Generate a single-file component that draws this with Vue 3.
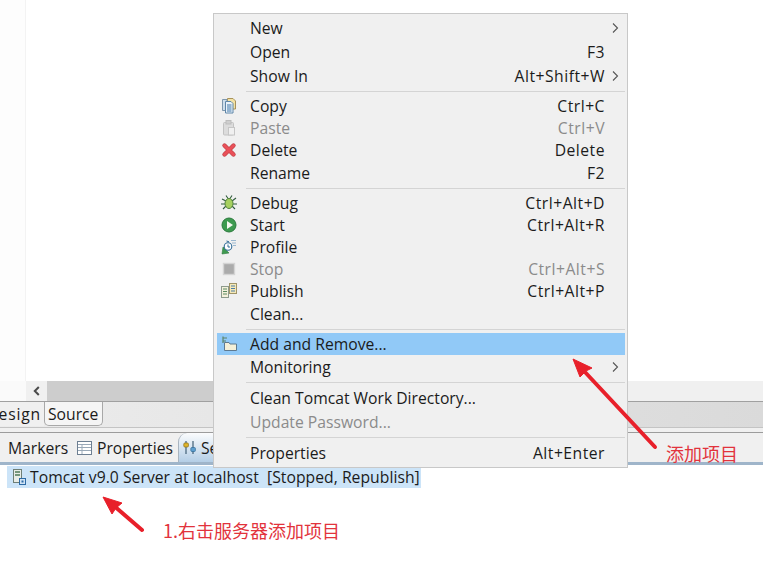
<script setup>
// menu rows, grouped; separators are drawn between the groups
const groups = [
  [
    { label: 'New', arrow: true },
    { label: 'Open', key: 'F3' },
    { label: 'Show In', key: 'Alt+Shift+W', arrow: true },
  ],
  [
    { label: 'Copy', key: 'Ctrl+C', icon: 'copy' },
    { label: 'Paste', key: 'Ctrl+V', icon: 'paste', off: true },
    { label: 'Delete', key: 'Delete', icon: 'delete' },
    { label: 'Rename', key: 'F2' },
  ],
  [
    { label: 'Debug', key: 'Ctrl+Alt+D', icon: 'debug' },
    { label: 'Start', key: 'Ctrl+Alt+R', icon: 'start' },
    { label: 'Profile', icon: 'profile' },
    { label: 'Stop', key: 'Ctrl+Alt+S', icon: 'stop', off: true },
    { label: 'Publish', key: 'Ctrl+Alt+P', icon: 'publish' },
    { label: 'Clean...' },
  ],
  [
    { label: 'Add and Remove...', icon: 'add', active: true },
    { label: 'Monitoring', arrow: true },
  ],
  [
    { label: 'Clean Tomcat Work Directory...' },
    { label: 'Update Password...', off: true },
  ],
  [{ label: 'Properties', key: 'Alt+Enter' }],
]

const serverLabel = 'Tomcat v9.0 Server at localhost  [Stopped, Republish]'
</script>

<template>
  <div class="page">
    <div class="editor"><div class="gutter"></div></div>

    <div class="hscroll">
      <div class="scroll-left"></div>
      <div class="scroll-btn">
        <svg width="10" height="10" viewBox="0 0 10 10"><path d="M6.8 1 L2.8 5 L6.8 9" fill="none" stroke="#4a4a4a" stroke-width="2" /></svg>
      </div>
      <div class="scroll-thumb"></div>
    </div>

    <div class="editor-tabs">
      <div class="etab design"><span>Design</span></div>
      <div class="etab source">Source</div>
    </div>
    <div class="tab-gap"></div>

    <div class="view-tabs">
      <div class="vtab markers">
        <svg class="marker-icon" width="16" height="16" viewBox="0 0 16 16"><circle cx="-2" cy="7" r="6" fill="#dfe6ee" stroke="#8aa0b4" /><path d="M3 11 L6 15" stroke="#8aa0b4" stroke-width="1.5" /></svg>
        <span>Markers</span>
      </div>
      <div class="vtab props">
        <svg width="15" height="14" viewBox="0 0 15 14"><rect x="0.5" y="0.5" width="14" height="13" fill="#fff" stroke="#6d7f92" /><path d="M1 3.5 H14 M1 6.5 H14 M1 9.5 H14 M5 3.5 V13" stroke="#9aa9b8" /></svg>
        <span>Properties</span>
      </div>
      <div class="vtab servers">
        <svg width="14" height="15" viewBox="0 0 14 15">
          <path d="M3 1 V14 M10 1 V14" stroke="#4d6a80" stroke-width="1.3" />
          <rect x="0.8" y="3" width="4.6" height="4" rx="1" fill="#e0b52c" stroke="#8a6d12" stroke-width=".7" />
          <rect x="7.8" y="7.5" width="4.6" height="4" rx="1" fill="#5e9fd0" stroke="#2f6a96" stroke-width=".7" />
        </svg>
        <span>Servers</span>
      </div>
    </div>
    <div class="view-edge"></div>

    <div class="tree">
      <div class="tree-row">
        <svg width="13" height="16" viewBox="0 0 13 16">
          <rect x="0.5" y="0.5" width="8" height="13" fill="#e8ece6" stroke="#6f7f76" />
          <path d="M2 3 H7 M2 6 H7" stroke="#4f7a58" stroke-width="1.4" />
          <rect x="6.5" y="9.5" width="6" height="6" fill="#cfe3f5" stroke="#2c6aa5" />
          <rect x="8.5" y="11.5" width="2" height="2" fill="#2c6aa5" />
        </svg>
        <span class="server-label">{{ serverLabel }}</span>
      </div>
    </div>

    <!-- context menu lies over the views -->
    <div class="menu">
      <template v-for="(group, g) in groups" :key="g">
        <div v-if="g > 0" class="sep"></div>
        <div
          v-for="item in group"
          :key="item.label"
          class="item"
          :class="{ off: item.off, active: item.active, iconed: item.icon }"
        >
          <div class="icon">
            <svg v-if="item.icon === 'copy'" width="16" height="16" viewBox="0 0 16 16">
              <path d="M6.5 .5 H12 L14.5 3 V11 H6.5 Z" fill="#f3e2a4" stroke="#a8925a" />
              <path d="M1.5 1.5 H6 V12.5 H1.5 Z" fill="#cfdeeb" stroke="#7d97ad" />
              <path d="M4.5 3.5 H10 L12 5.5 V15 H4.5 Z" fill="#eaf2f9" stroke="#5f86a8" />
              <path d="M6 7 H10.5 M6 9 H10.5 M6 11 H10.5 M6 13 H10.5" stroke="#3f76a8" />
            </svg>
            <svg v-else-if="item.icon === 'paste'" width="16" height="16" viewBox="0 0 16 16">
              <rect x="2.5" y="2.5" width="10" height="12.5" rx="1" fill="#dcdcdc" stroke="#c2c2c2" />
              <rect x="5" y="0.5" width="5" height="3.5" fill="#cfcfcf" stroke="#bdbdbd" />
              <rect x="7.5" y="7.5" width="6" height="7.5" fill="#f0f0f0" stroke="#c6c6c6" />
            </svg>
            <svg v-else-if="item.icon === 'delete'" width="16" height="16" viewBox="0 0 16 16">
              <path d="M3.5 3.5 L12.5 12.5 M12.5 3.5 L3.5 12.5" stroke="#c2444a" stroke-width="4.4" stroke-linecap="round" />
              <path d="M3.5 3.5 L12.5 12.5 M12.5 3.5 L3.5 12.5" stroke="#ea5058" stroke-width="3" stroke-linecap="round" />
            </svg>
            <svg v-else-if="item.icon === 'debug'" width="16" height="16" viewBox="0 0 16 16">
              <path d="M1 4 L5 6 M15 3 L11 6 M0 9 H4 M16 9 H12 M2 14 L5 11 M14 14 L11 11 M5 0.5 L7 3.5 M11 0.5 L9 3.5" stroke="#2f5a3c" stroke-width="1.1" />
              <ellipse cx="8" cy="8.5" rx="4" ry="5" fill="#a6d05f" stroke="#4d7f3a" />
            </svg>
            <svg v-else-if="item.icon === 'start'" width="16" height="16" viewBox="0 0 16 16">
              <circle cx="8" cy="8" r="7" fill="#3d9a4f" stroke="#2a7a3c" />
              <path d="M6 4 L12 8 L6 12 Z" fill="#f4f8f0" />
            </svg>
            <svg v-else-if="item.icon === 'profile'" width="16" height="16" viewBox="0 0 16 16">
              <path d="M1 15 L2 8 L8 14 Z" fill="#3f9a50" stroke="#2a7a3c" stroke-width=".6" />
              <circle cx="7" cy="7.5" r="3.8" fill="#fff" stroke="#2f6a96" stroke-width="1.1" />
              <path d="M7 5.5 V8 H9 M5.5 2 L8 2.8" stroke="#2f6a96" fill="none" />
              <path d="M10 1.5 H15 M11 4 H15 M12 6.5 H15" stroke="#9ab8d0" />
            </svg>
            <svg v-else-if="item.icon === 'stop'" width="16" height="16" viewBox="0 0 16 16">
              <rect x="2.5" y="2.5" width="11" height="11" fill="#ababab" stroke="#d4d4d4" stroke-width="1.4" />
            </svg>
            <svg v-else-if="item.icon === 'publish'" width="16" height="16" viewBox="0 0 16 16">
              <rect x="0.5" y="3.5" width="7" height="11" fill="#f4f0dc" stroke="#8d9a8c" />
              <path d="M2 6 H6 M2 8.5 H6 M2 11 H6" stroke="#5a8a60" />
              <rect x="8.5" y="0.5" width="7" height="10" fill="#f6e9b8" stroke="#a09468" />
              <path d="M10 3 H14 M10 5.5 H14 M10 8 H14" stroke="#4a7da8" />
            </svg>
            <svg v-else-if="item.icon === 'add'" width="16" height="16" viewBox="0 0 16 16">
              <path d="M2 0.5 V7 M2 2 H6 M2 5 H5" stroke="#5d8468" stroke-width="1.2" />
              <path d="M3.5 6.5 H8 L9 8 H15.5 V14.5 H3.5 Z" fill="#f5f0d8" stroke="#5f7a90" />
            </svg>
          </div>
          <span class="label">{{ item.label }}</span>
          <span class="key">{{ item.key }}</span>
          <div class="arrow">
            <svg v-if="item.arrow" width="7" height="10" viewBox="0 0 7 10"><path d="M1 .5 L5.5 5 L1 9.5" fill="none" stroke="#555" stroke-width="1.1" /></svg>
          </div>
        </div>
      </template>
    </div>

    <!-- red annotations drawn on top of the screenshot -->
    <svg class="marks" width="763" height="582" viewBox="0 0 763 582">
      <path d="M655 447 L584 371" stroke="#e8202a" stroke-width="4" stroke-linecap="round" />
      <path d="M573 359 L592 368 L586 371 L580 377 Z" fill="#e8202a" stroke="#e8202a" stroke-linejoin="round" />
      <path d="M142 530 L113 505" stroke="#e8202a" stroke-width="4" stroke-linecap="round" />
      <path d="M103 497 L122 503 L116 508 L112 514 Z" fill="#e8202a" stroke="#e8202a" stroke-linejoin="round" />
    </svg>
    <div class="note note-menu">添加项目</div>
    <div class="note note-server">1.右击服务器添加项目</div>
  </div>
</template>

<style>
html, body {
  margin: 0;
  background: #fff;
  overflow: hidden;
}
</style>

<style scoped>
.page {
  position: relative;
  width: 763px;
  height: 582px;
  overflow: hidden;
  background: #fff;
  font-family: "Open Sans", "Noto Sans", sans-serif;
  font-size: 15.7px;
  color: #1b1b1b;
}

.editor {
  height: 381px;
}

.gutter {
  width: 26px;
  height: 100%;
  box-sizing: border-box;
  background: #fdfdfd;
  border-right: 1px solid #f3f3f3;
}

.hscroll {
  display: flex;
  height: 20px;
  background: #f0f0f0;
}

.scroll-left {
  width: 26px;
  background: #fafafa;
}

.scroll-btn {
  width: 21px;
  display: flex;
  align-items: center;
  justify-content: center;
}

.scroll-thumb {
  width: 300px;
  background: #cdcdcd;
}

.editor-tabs {
  display: flex;
  height: 26px;
  box-sizing: border-box;
  border-top: 1px solid #a0a0a0;
  background: linear-gradient(to right, #ececec, #dadada);
}

.etab {
  display: flex;
  align-items: center;
  height: 24px;
  box-sizing: border-box;
}

.design {
  width: 44px;
  padding-right: 3px;
  justify-content: flex-end;
  background: #f0f0f0;
  flex-shrink: 0;
}

.design span {
  flex-shrink: 0;
  letter-spacing: 0.8px;
}

.source {
  width: 59px;
  padding-left: 3px;
  background: #f5f5f5;
  border-left: 1px solid #a8a8a8;
  border-right: 1px solid #a8a8a8;
  border-bottom: 1px solid #a8a8a8;
  border-radius: 0 0 5px 5px;
}

.tab-gap {
  height: 6px;
  box-sizing: border-box;
  background: #f0f0f0;
  border-top: 1px solid #c4c4c4;
  border-bottom: 1px solid #9c9c9c;
}

.view-tabs {
  display: flex;
  height: 29px;
  background: #f0f0f0;
}

.vtab {
  display: flex;
  align-items: center;
  gap: 5px;
}

.markers {
  width: 77px;
  gap: 4px;
  flex-shrink: 0;
}

.marker-icon {
  margin-left: -12px;
}

.props {
  width: 101px;
}

.servers {
  width: 200px;
  box-sizing: border-box;
  gap: 4px;
  padding-left: 4px;
  border-top-left-radius: 9px;
  border-left: 1px solid #a8b4c0;
  background: linear-gradient(#fbfcfd, #b4cee6);
}

.view-edge {
  height: 3px;
  background: #9fb5ca;
}

.tree {
  padding: 1px 0 0 7px;
}

.tree-row {
  display: flex;
  align-items: center;
  gap: 4px;
  width: 414px;
  height: 22px;
  box-sizing: border-box;
  padding-left: 6px;
  background: #cce4f8;
}

.server-label {
  white-space: pre;
  padding-bottom: 1px;
  letter-spacing: 0.04px;
}

.menu {
  position: absolute;
  left: 213px;
  top: 13px;
  width: 415px;
  box-sizing: border-box;
  padding: 2px 2px 2px 3px;
  background: #f0f0f0;
  border: 1px solid #c8c8c8;
}

.sep {
  height: 1px;
  margin: 3px 0 3px 29px;
  background: #d4d4d4;
}

.item {
  display: flex;
  align-items: center;
  height: 24px;
}

.item.iconed {
  height: 22px;
}

.item.off {
  color: #8b8b8b;
}

.item.active {
  background: #91c9f7;
}

.icon {
  width: 33px;
  display: flex;
  align-items: center;
  padding-left: 4px;
  box-sizing: border-box;
}

.label {
  flex: 1;
  white-space: nowrap;
  padding-bottom: 1px;
}

.key {
  white-space: nowrap;
  padding-bottom: 1px;
  letter-spacing: 0.5px;
}

.arrow {
  width: 20px;
  display: flex;
  align-items: center;
  justify-content: center;
}

.marks {
  position: absolute;
  left: 0;
  top: 0;
}

.note {
  position: absolute;
  font-family: "Noto Sans CJK SC", sans-serif;
  font-size: 18px;
  line-height: 24px;
  color: #e2333c;
  white-space: nowrap;
}

.note-menu {
  left: 666px;
  top: 441px;
}

.note-server {
  left: 163px;
  top: 518px;
}
</style>
